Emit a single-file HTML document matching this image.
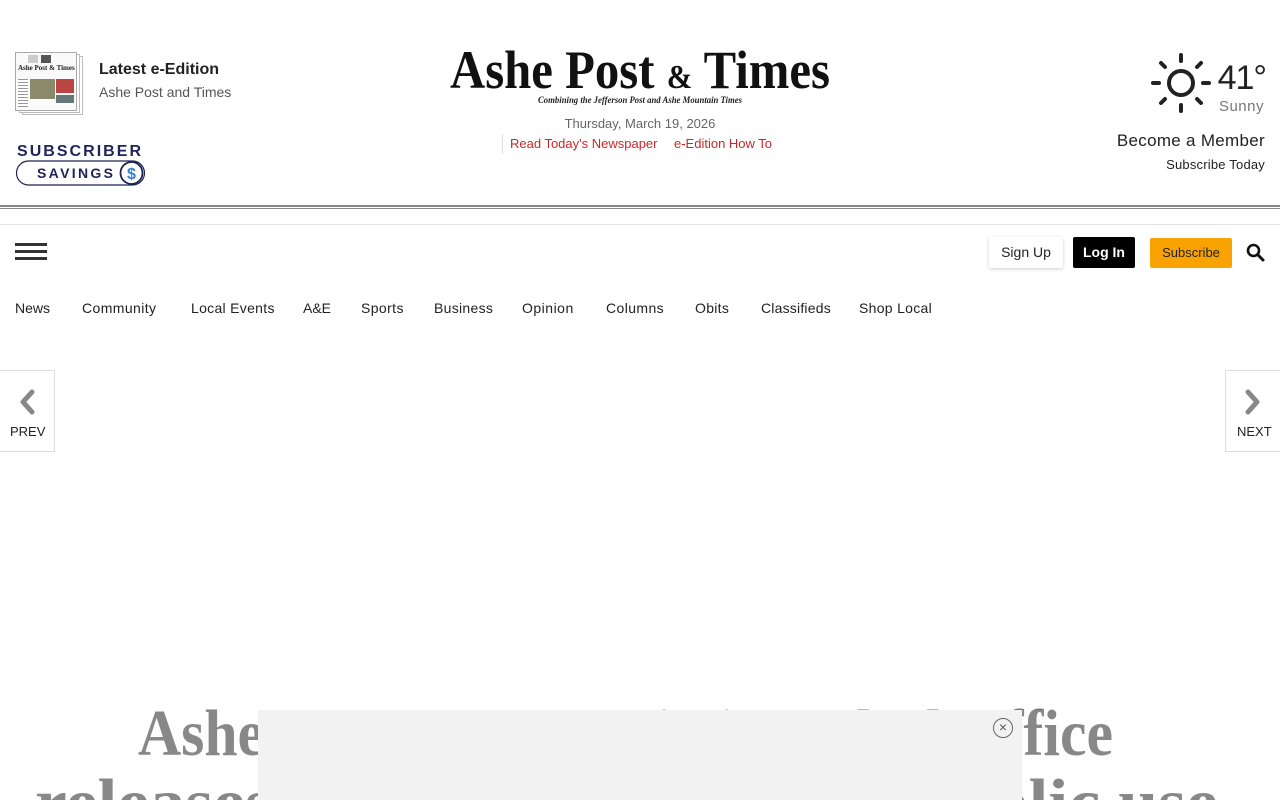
<!DOCTYPE html>
<html style="width:1280px;height:800px;overflow:hidden"><head><meta charset="utf-8"><style>
*{margin:0;padding:0;box-sizing:border-box}
body{width:1280px;height:800px;overflow:hidden;background:#fff;font-family:"Liberation Sans",sans-serif;position:relative;color:#222}
.abs{position:absolute;white-space:nowrap}
.nav a{position:absolute;top:300px;font-size:14px;color:#222;text-decoration:none;white-space:nowrap}
</style></head><body>
<!-- e-edition thumb -->
<div class="abs" style="left:22px;top:56px;width:61px;height:59px;border:1px solid #bbb;background:#fff"></div>
<div class="abs" style="left:19px;top:54px;width:61px;height:59px;border:1px solid #bbb;background:#fff"></div>
<div class="abs" style="left:15px;top:52px;width:62px;height:59px;border:1px solid #aaa;background:#fafafa;overflow:hidden">
 <div class="abs" style="left:12px;top:2px;width:10px;height:8px;background:#ccc"></div>
 <div class="abs" style="left:25px;top:2px;width:10px;height:8px;background:#555"></div>
 <div class="abs" style="left:2px;top:11px;font:bold 7px 'Liberation Serif',serif;color:#222">Ashe Post &amp; Times</div>
 <div class="abs" style="left:14px;top:26px;width:25px;height:20px;background:#8a8a6a"></div>
 <div class="abs" style="left:40px;top:26px;width:18px;height:14px;background:#b44"></div>
 <div class="abs" style="left:40px;top:42px;width:18px;height:8px;background:#677"></div>
 <div class="abs" style="left:2px;top:26px;width:10px;height:28px;background:repeating-linear-gradient(#999 0 1px,#fff 1px 3px)"></div>
</div>
<div class="abs" style="left:99px;top:61px;font-size:16px;font-weight:bold;color:#222">Latest e-Edition</div>
<div class="abs" style="left:99px;top:84px;font-size:14px;color:#555">Ashe Post and Times</div>
<!-- subscriber savings -->
<svg class="abs" style="left:15px;top:140px" width="132" height="47" viewBox="0 0 132 47">
<text x="2" y="16" font-family="Liberation Sans" font-weight="bold" font-size="16" fill="#1f2358" textLength="124" lengthAdjust="spacing">SUBSCRIBER</text>
<rect x="1.5" y="21" width="128" height="24" rx="12" fill="none" stroke="#1f2358" stroke-width="1.2"/>
<text x="22" y="38" font-family="Liberation Sans" font-weight="bold" font-size="14" fill="#1f2358" textLength="76" lengthAdjust="spacing">SAVINGS</text>
<circle cx="116.5" cy="33" r="11" fill="#fff" stroke="#1f2358" stroke-width="1.8"/>
<text x="116.5" y="39" text-anchor="middle" font-family="Liberation Sans" font-weight="bold" font-size="16" fill="#2a7fe0">$</text>
</svg>
<!-- masthead -->
<svg class="abs" style="left:440px;top:36px" width="400" height="72" viewBox="0 0 400 72">
<text x="10" y="52" font-family="Liberation Serif" font-weight="bold" font-size="54" fill="#111" textLength="380" lengthAdjust="spacingAndGlyphs">Ashe Post <tspan font-size="34">&amp;</tspan> Times</text>
<text x="98" y="67" font-family="Liberation Serif" font-style="italic" font-weight="bold" font-size="9" fill="#222" textLength="204" lengthAdjust="spacingAndGlyphs">Combining the Jefferson Post and Ashe Mountain Times</text>
</svg>
<div class="abs" style="left:440px;top:116px;width:400px;text-align:center;font-size:13px;color:#666">Thursday, March 19, 2026</div>
<div class="abs" style="left:502px;top:134px;width:1px;height:20px;background:#ddd"></div>
<div class="abs" style="left:510px;top:136px;font-size:13px;color:#c8282a">Read Today's Newspaper</div>
<div class="abs" style="left:674px;top:136px;font-size:13px;color:#c8282a">e-Edition How To</div>
<!-- weather -->
<svg class="abs" style="left:1150px;top:52px" width="62" height="62" viewBox="0 0 62 62" stroke="#222" stroke-width="4" stroke-linecap="round" fill="none">
<circle cx="31" cy="31" r="12"/>
<line x1="31" y1="3" x2="31" y2="9"/><line x1="31" y1="53" x2="31" y2="59"/>
<line x1="3" y1="31" x2="9" y2="31"/><line x1="53" y1="31" x2="59" y2="31"/>
<line x1="11" y1="11" x2="15" y2="15"/><line x1="47" y1="47" x2="51" y2="51"/>
<line x1="51" y1="11" x2="47" y2="15"/><line x1="11" y1="51" x2="15" y2="47"/>
</svg>
<div class="abs" style="right:14px;top:59px;font-size:34px;color:#222;letter-spacing:-1px">41°</div>
<div class="abs" style="right:16px;top:98px;font-size:15px;color:#777;letter-spacing:.5px">Sunny</div>
<div class="abs" style="right:15px;top:131px;font-size:17px;color:#222;letter-spacing:.3px">Become a Member</div>
<div class="abs" style="right:15px;top:157px;font-size:13px;color:#222;letter-spacing:.2px">Subscribe Today</div>
<!-- lines -->
<div class="abs" style="left:0;top:205px;width:1280px;height:2px;background:#888"></div>
<div class="abs" style="left:0;top:208px;width:1280px;height:1px;background:#888"></div>
<div class="abs" style="left:0;top:224px;width:1280px;height:1px;background:#e3e3e3"></div>
<!-- hamburger -->
<div class="abs" style="left:15px;top:243px;width:32px;height:3px;background:#333"></div>
<div class="abs" style="left:15px;top:250px;width:32px;height:3px;background:#333"></div>
<div class="abs" style="left:15px;top:257px;width:32px;height:3px;background:#333"></div>
<!-- buttons -->
<div class="abs" style="left:989px;top:237px;width:74px;height:31px;background:#fff;box-shadow:0 1px 3px rgba(0,0,0,.2);border-radius:2px;font-size:14px;text-align:center;line-height:31px;color:#222">Sign Up</div>
<div class="abs" style="left:1073px;top:237px;width:62px;height:31px;background:#000;border-radius:2px;font-size:14px;font-weight:bold;text-align:center;line-height:31px;color:#fff">Log In</div>
<div class="abs" style="left:1150px;top:238px;width:82px;height:30px;background:#f8a300;border-radius:2px;font-size:13px;text-align:center;line-height:30px;color:#222">Subscribe</div>
<svg class="abs" style="left:1246px;top:243px" width="19" height="19" viewBox="0 0 19 19"><circle cx="7.5" cy="7.5" r="5.5" stroke="#111" stroke-width="2.6" fill="none"/><line x1="11.5" y1="11.5" x2="17" y2="17" stroke="#111" stroke-width="3" stroke-linecap="round"/></svg>
<!-- nav -->
<div class="nav">
<a style="left:15px">News</a><a style="left:82px;letter-spacing:.4px">Community</a><a style="left:191px;letter-spacing:.3px">Local Events</a><a style="left:303px">A&amp;E</a><a style="left:361px;letter-spacing:.4px">Sports</a><a style="left:434px;letter-spacing:.3px">Business</a><a style="left:522px;letter-spacing:.5px">Opinion</a><a style="left:606px;letter-spacing:.4px">Columns</a><a style="left:695px;letter-spacing:.3px">Obits</a><a style="left:761px;letter-spacing:.2px">Classifieds</a><a style="left:859px;letter-spacing:.3px">Shop Local</a>
</div>
<!-- prev/next -->
<div class="abs" style="left:-1px;top:370px;width:56px;height:82px;border:1px solid #ddd"></div>
<svg class="abs" style="left:17px;top:389px" width="20" height="26" viewBox="0 0 20 26"><path d="M15 3L6 13l9 10" stroke="#888" stroke-width="5" fill="none" stroke-linecap="round" stroke-linejoin="round"/></svg>
<div class="abs" style="left:10px;top:424px;font-size:13px;color:#222">PREV</div>
<div class="abs" style="left:1225px;top:370px;width:57px;height:82px;border:1px solid #ddd"></div>
<svg class="abs" style="left:1243px;top:389px" width="20" height="26" viewBox="0 0 20 26"><path d="M5 3l9 10-9 10" stroke="#888" stroke-width="5" fill="none" stroke-linecap="round" stroke-linejoin="round"/></svg>
<div class="abs" style="left:1237px;top:424px;font-size:13px;color:#222">NEXT</div>
<!-- headline -->
<svg class="abs" style="left:0;top:690px" width="1280" height="110" viewBox="0 0 1280 110">
<text x="138" y="65" font-family="Liberation Serif" font-weight="bold" font-size="66" fill="#757575" textLength="975" lengthAdjust="spacingAndGlyphs">Ashe County Commission Clerk office</text>
<text x="35" y="134" font-family="Liberation Serif" font-weight="bold" font-size="66" fill="#757575" textLength="1183" lengthAdjust="spacingAndGlyphs">releases meeting records for public use</text>
</svg>
<div class="abs" style="left:0;top:710px;width:1280px;height:90px;background:rgba(250,250,250,.15)"></div>
<div class="abs" style="left:258px;top:710px;width:764px;height:90px;background:#f3f2f2"></div>
<div class="abs" style="left:993px;top:718px;width:20px;height:20px;border:1px solid #666;border-radius:50%;font-size:14px;line-height:17px;text-align:center;color:#555">×</div>
</body></html>
